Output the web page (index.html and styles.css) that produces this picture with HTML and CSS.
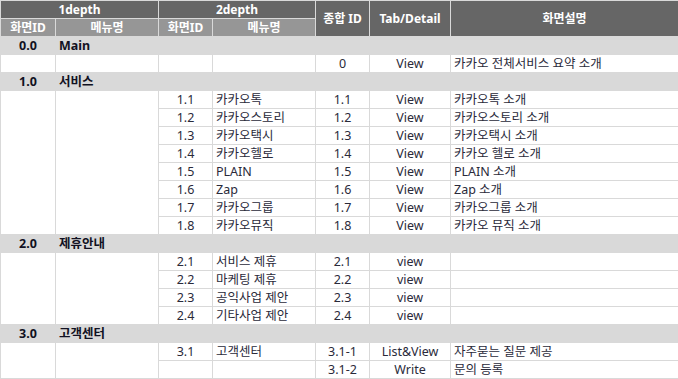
FILE: index.html
```html
<!DOCTYPE html>
<html lang="ko">
<head>
<meta charset="utf-8">
<link rel="stylesheet" href="styles.css">
</head>
<body>
<table class="grid">
  <colgroup>
    <col class="c1"><col class="c2"><col class="c3"><col class="c4"><col class="c5"><col class="c6"><col class="c7">
  </colgroup>
  <thead>
    <tr class="h1">
      <th colspan="2">1depth</th>
      <th colspan="2">2depth</th>
      <th rowspan="2">종합 ID</th>
      <th rowspan="2">Tab/Detail</th>
      <th rowspan="2">화면설명</th>
    </tr>
    <tr class="h2">
      <th>화면ID</th><th>메뉴명</th><th>화면ID</th><th>메뉴명</th>
    </tr>
  </thead>
  <tbody>
    <tr class="sec"><td class="ctr">0.0</td><td class="lft">Main</td><td colspan="5"></td></tr>
    <tr><td></td><td></td><td></td><td></td><td class="ctr">0</td><td class="ctr">View</td><td class="lft">카카오 전체서비스 요약 소개</td></tr>

    <tr class="sec"><td class="ctr">1.0</td><td class="lft">서비스</td><td colspan="5"></td></tr>
    <tr><td rowspan="8"></td><td rowspan="8"></td><td class="ctr">1.1</td><td class="lft">카카오톡</td><td class="ctr">1.1</td><td class="ctr">View</td><td class="lft">카카오톡 소개</td></tr>
    <tr><td class="ctr">1.2</td><td class="lft">카카오스토리</td><td class="ctr">1.2</td><td class="ctr">View</td><td class="lft">카카오스토리 소개</td></tr>
    <tr><td class="ctr">1.3</td><td class="lft">카카오택시</td><td class="ctr">1.3</td><td class="ctr">View</td><td class="lft">카카오택시 소개</td></tr>
    <tr><td class="ctr">1.4</td><td class="lft">카카오헬로</td><td class="ctr">1.4</td><td class="ctr">View</td><td class="lft">카카오 헬로 소개</td></tr>
    <tr><td class="ctr">1.5</td><td class="lft">PLAIN</td><td class="ctr">1.5</td><td class="ctr">View</td><td class="lft">PLAIN 소개</td></tr>
    <tr><td class="ctr">1.6</td><td class="lft">Zap</td><td class="ctr">1.6</td><td class="ctr">View</td><td class="lft">Zap 소개</td></tr>
    <tr><td class="ctr">1.7</td><td class="lft">카카오그룹</td><td class="ctr">1.7</td><td class="ctr">View</td><td class="lft">카카오그룹 소개</td></tr>
    <tr><td class="ctr">1.8</td><td class="lft">카카오뮤직</td><td class="ctr">1.8</td><td class="ctr">View</td><td class="lft">카카오 뮤직 소개</td></tr>

    <tr class="sec"><td class="ctr">2.0</td><td class="lft">제휴안내</td><td colspan="5"></td></tr>
    <tr><td rowspan="4"></td><td rowspan="4"></td><td class="ctr">2.1</td><td class="lft">서비스 제휴</td><td class="ctr">2.1</td><td class="ctr">view</td><td></td></tr>
    <tr><td class="ctr">2.2</td><td class="lft">마케팅 제휴</td><td class="ctr">2.2</td><td class="ctr">view</td><td></td></tr>
    <tr><td class="ctr">2.3</td><td class="lft">공익사업 제안</td><td class="ctr">2.3</td><td class="ctr">view</td><td></td></tr>
    <tr><td class="ctr">2.4</td><td class="lft">기타사업 제안</td><td class="ctr">2.4</td><td class="ctr">view</td><td></td></tr>

    <tr class="sec"><td class="ctr">3.0</td><td class="lft">고객센터</td><td colspan="5"></td></tr>
    <tr><td rowspan="2"></td><td rowspan="2"></td><td class="ctr">3.1</td><td class="lft">고객센터</td><td class="ctr">3.1-1</td><td class="ctr">List&amp;View</td><td class="lft">자주묻는 질문 제공</td></tr>
    <tr><td></td><td></td><td class="ctr">3.1-2</td><td class="ctr">Write</td><td class="lft">문의 등록</td></tr>
  </tbody>
</table>
</body>
</html>
```
FILE: styles.css
```css
html, body {
  margin: 0;
  padding: 0;
  background: #ffffff;
}

.grid {
  border-collapse: collapse;
  table-layout: fixed;
  width: 678px;
  font-family: "Noto Sans", "Noto Sans CJK KR", sans-serif;
  font-size: 12.5px;
  color: #2a2a3a;
}

.c1 { width: 55px; }
.c2 { width: 103px; }
.c3 { width: 54px; }
.c4 { width: 103px; }
.c5 { width: 54px; }
.c6 { width: 81px; }
.c7 { width: 228px; }

.grid th,
.grid td {
  border: 1px solid #d9d9d9;
  height: 17px;
  padding: 0 3px;
  line-height: 16px;
  white-space: nowrap;
  overflow: hidden;
}

.grid th {
  color: #ffffff;
  font-size: 12px;
  font-weight: bold;
  text-align: center;
  background: #666666;
}

.grid .h2 th {
  background: #969696;
}

.sec td {
  background: #d9d9d9;
  font-weight: bold;
  color: #111122;
}

.ctr { text-align: center; }
.lft { text-align: left; }
```
